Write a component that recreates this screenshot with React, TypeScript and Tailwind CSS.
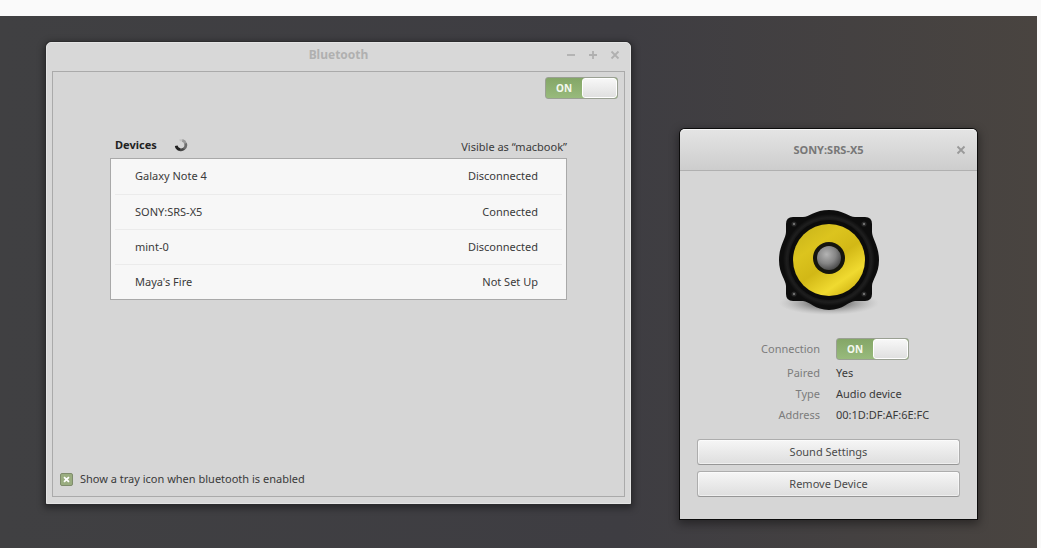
import { useState } from 'react';
import type { ReactNode } from 'react';
import clsx from 'clsx';

const DEVICES = [
  { name: 'Galaxy Note 4', status: 'Disconnected' },
  { name: 'SONY:SRS-X5', status: 'Connected' },
  { name: 'mint-0', status: 'Disconnected' },
  { name: "Maya's Fire", status: 'Not Set Up' },
];

const DETAILS = [
  { label: 'Paired', value: 'Yes' },
  { label: 'Type', value: 'Audio device' },
  { label: 'Address', value: '00:1D:DF:AF:6E:FC' },
];

function Toggle({ id, label }: { id: string; label?: string }) {
  const [on, setOn] = useState(true);

  return (
    <span
      className={clsx(
        'relative flex h-[22px] w-[73px] overflow-hidden rounded-[3px] border',
        on ? 'border-[#9aa093] bg-linear-to-b from-[#84a667] to-[#98ba7c]' : 'flex-row-reverse border-[#a5a5a5] bg-[#c4c4c4]',
      )}
    >
      <input
        id={id}
        type="checkbox"
        role="switch"
        aria-label={label}
        checked={on}
        onChange={(e) => setOn(e.target.checked)}
        className="absolute inset-0 cursor-pointer appearance-none"
      />
      <span className="flex-1 text-center text-[10px] leading-5 font-bold text-[#f4f8ef]">{on ? 'ON' : 'OFF'}</span>
      <span className="w-[35px] rounded-[3px] border border-white bg-linear-to-b from-[#f7f7f7] to-[#e0e0e0]"></span>
    </span>
  );
}

function TitleButton({ label, children }: { label: string; children: ReactNode }) {
  return (
    <button type="button" aria-label={label} className="flex size-3 items-center justify-center">
      <svg viewBox="0 0 12 12" className="size-3" fill="none" stroke="currentColor" strokeWidth="1.8">
        {children}
      </svg>
    </button>
  );
}

function Spinner() {
  return (
    <svg viewBox="0 0 14 14" className="size-3.5" fill="none" strokeWidth="2.8">
      <path d="M5.5 2.4 A4.8 4.8 0 0 1 8.6 2.5" stroke="#c2c2c2" strokeWidth="2" />
      <path d="M8.3 2.4 A4.8 4.8 0 0 1 11.6 5.6" stroke="#9a9a9a" />
      <path d="M11.5 5.4 A4.8 4.8 0 0 1 9.8 10.9" stroke="#6e6e6e" />
      <path d="M10 10.7 A4.8 4.8 0 0 1 5.8 11.7" stroke="#484848" />
      <path d="M6 11.7 A4.8 4.8 0 0 1 2.2 7.8" stroke="#222" />
    </svg>
  );
}

function Speaker() {
  return (
    <svg viewBox="0 0 112 112" className="size-28" role="img" aria-label="Speaker">
      <defs>
        <linearGradient id="cone" x1="0.1" y1="0" x2="0.8" y2="1">
          <stop offset="0" stopColor="#c8b31a" />
          <stop offset="0.3" stopColor="#dcc41e" />
          <stop offset="0.55" stopColor="#d2b816" />
          <stop offset="0.8" stopColor="#f0da30" />
          <stop offset="1" stopColor="#cdb010" />
        </linearGradient>
        <radialGradient id="cap" cx="0.4" cy="0.35" r="0.7">
          <stop offset="0" stopColor="#b4b4b4" />
          <stop offset="0.55" stopColor="#858585" />
          <stop offset="1" stopColor="#444" />
        </radialGradient>
        <radialGradient id="rim">
          <stop offset="0.8" stopColor="#0b0b0b" />
          <stop offset="0.92" stopColor="#1e1e1e" />
          <stop offset="1" stopColor="#0d0d0d" />
        </radialGradient>
        <radialGradient id="floor">
          <stop offset="0.4" stopColor="#555" stopOpacity="0.6" />
          <stop offset="1" stopColor="#999" stopOpacity="0" />
        </radialGradient>
      </defs>
      <ellipse cx="56" cy="99" rx="50" ry="12" fill="url(#floor)" />
      <path
        d="M20 13 H30 C36 13 42 6 56 6 C70 6 76 13 82 13 H92 Q99 13 99 20 V28 C99 34 106 42 106 56 C106 70 99 76 99 82 V90 Q99 97 92 97 H82 C76 97 70 106 56 106 C42 106 36 97 30 97 H20 Q13 97 13 90 V82 C13 76 6 70 6 56 C6 42 13 34 13 28 V20 Q13 13 20 13 Z"
        fill="#0d0d0d"
      />
      <circle cx="56" cy="56" r="46" fill="url(#rim)" />
      <circle cx="56" cy="56" r="40" fill="#0b0b0b" />
      <circle cx="56" cy="56" r="36" fill="url(#cone)" />
      <circle cx="56" cy="54" r="16" fill="#15150d" />
      <circle cx="56" cy="54" r="12" fill="url(#cap)" />
      {[[21, 20], [91, 20], [21, 90], [91, 90]].map(([cx, cy]) => (
        <g key={`${cx}-${cy}`}>
          <circle cx={cx} cy={cy} r="2.6" fill="#262626" />
          <circle cx={cx} cy={cy} r="1.2" fill="#707070" />
        </g>
      ))}
    </svg>
  );
}

function BluetoothWindow() {
  return (
    <section className="absolute top-[26px] left-[46px] flex h-[462px] w-[585px] flex-col rounded-t-[5px] border border-[#e4e4e4] bg-[#d8d8d8] px-[5px] pb-[6px] shadow-[0_0_0_1px_#2c2c2e,0_2px_7px_2px_rgba(0,0,0,0.4)]">
      <header className="grid h-7 grid-cols-[1fr_auto_1fr] items-center pb-1 text-[#b0b0b0]">
        <h1 className="col-start-2 text-xs font-bold">Bluetooth</h1>
        <div className="flex justify-end gap-2.5 pr-1">
          <TitleButton label="Minimize"><path d="M2 6 H10" /></TitleButton>
          <TitleButton label="Maximize"><path d="M2 6 H10 M6 2 V10" /></TitleButton>
          <TitleButton label="Close"><path d="M2.5 2.5 L9.5 9.5 M9.5 2.5 L2.5 9.5" /></TitleButton>
        </div>
      </header>

      <div className="flex flex-1 flex-col border border-[#aaa] bg-[#d6d6d6] px-1.5 pt-[5px] pb-[9px]">
        <div className="flex justify-end">
          <Toggle id="bluetooth" label="Bluetooth" />
        </div>

        <div className="mt-[34px] px-[51px]">
          <div className="flex h-[25px] items-center gap-[17px] pb-0.5 pl-[5px]">
            <h2 className="font-bold text-[#222]">Devices</h2>
            <Spinner />
            <p className="ml-auto pt-1">Visible as “macbook”</p>
          </div>
          <div className="border border-[#a9a9a9] bg-[#f7f7f7] px-1">
            <table className="w-full" aria-label="Devices">
              <tbody>
                {DEVICES.map((device) => (
                  <tr key={device.name} className="h-[35px] border-b border-[#ebebeb] last:border-0">
                    <td className="pl-5">{device.name}</td>
                    <td className="pr-6 text-right">{device.status}</td>
                  </tr>
                ))}
              </tbody>
            </table>
          </div>
        </div>

        <label className="mt-auto flex items-center gap-[7px] pl-px">
          <span className="relative flex size-[13px] items-center justify-center rounded-[2px] border border-[#7f8c6c] bg-[#9aad80]">
            <input type="checkbox" defaultChecked className="peer absolute inset-0 appearance-none" />
            <svg viewBox="0 0 8 8" className="invisible size-[7px] peer-checked:visible" stroke="#fff" strokeWidth="2">
              <path d="M1.2 1.2 L6.8 6.8 M6.8 1.2 L1.2 6.8" />
            </svg>
          </span>
          Show a tray icon when bluetooth is enabled
        </label>
      </div>
    </section>
  );
}

function DeviceDialog() {
  return (
    <section className="absolute top-[113px] left-[680px] h-[390px] w-[297px] rounded-t-[5px] bg-[#d6d6d6] shadow-[0_0_0_1px_#0c0c0c,0_3px_10px_2px_rgba(0,0,0,0.4)]">
      <header className="grid h-[42px] grid-cols-[1fr_auto_1fr] items-center rounded-t-[5px] border-t border-b border-t-[#f4f4f4] border-b-[#b0b0b0] bg-linear-to-b from-[#e4e4e4] to-[#cdcdcd] px-2.5 text-[#777]">
        <h2 className="col-start-2 text-[11px] font-bold">SONY:SRS-X5</h2>
        <div className="flex justify-end text-[#999]">
          <TitleButton label="Close"><path d="M2.5 2.5 L9.5 9.5 M9.5 2.5 L2.5 9.5" /></TitleButton>
        </div>
      </header>

      <div className="flex flex-col items-center px-[17px] pt-[33px]">
        <Speaker />

        <div className="mt-[22px] grid w-full grid-cols-[123px_1fr] items-center gap-x-4">
          <label htmlFor="connection" className="text-right text-[#7c7c7c]">Connection</label>
          <Toggle id="connection" />
        </div>
        <dl className="mt-0.5 grid w-full grid-cols-[123px_1fr] gap-x-4 leading-[21px]">
          {DETAILS.map((detail) => (
            <div key={detail.label} className="contents">
              <dt className="text-right text-[#7c7c7c]">{detail.label}</dt>
              <dd>{detail.value}</dd>
            </div>
          ))}
        </dl>

        <div className="mt-3.5 flex w-full flex-col gap-1.5">
          {['Sound Settings', 'Remove Device'].map((text) => (
            <button
              key={text}
              type="button"
              className="h-[26px] rounded-[3px] border border-[#adadad] border-b-[#969696] bg-linear-to-b from-[#f6f6f6] to-[#dedede] text-[#4a4a4a] shadow-[inset_0_0_0_1px_rgba(255,255,255,0.5)]"
            >
              {text}
            </button>
          ))}
        </div>
      </div>
    </section>
  );
}

export default function App() {
  return (
    <div className="min-h-screen bg-[#fafafa] pt-4 pr-1 font-['Noto_Sans',sans-serif] text-[11px] leading-4 text-[#3a3a3a]">
      <main className="relative h-[calc(100vh-16px)] overflow-hidden bg-linear-to-r from-[#404042] via-[#3e3d42] via-60% to-[#494440]">
        <BluetoothWindow />
        <DeviceDialog />
      </main>
    </div>
  );
}
